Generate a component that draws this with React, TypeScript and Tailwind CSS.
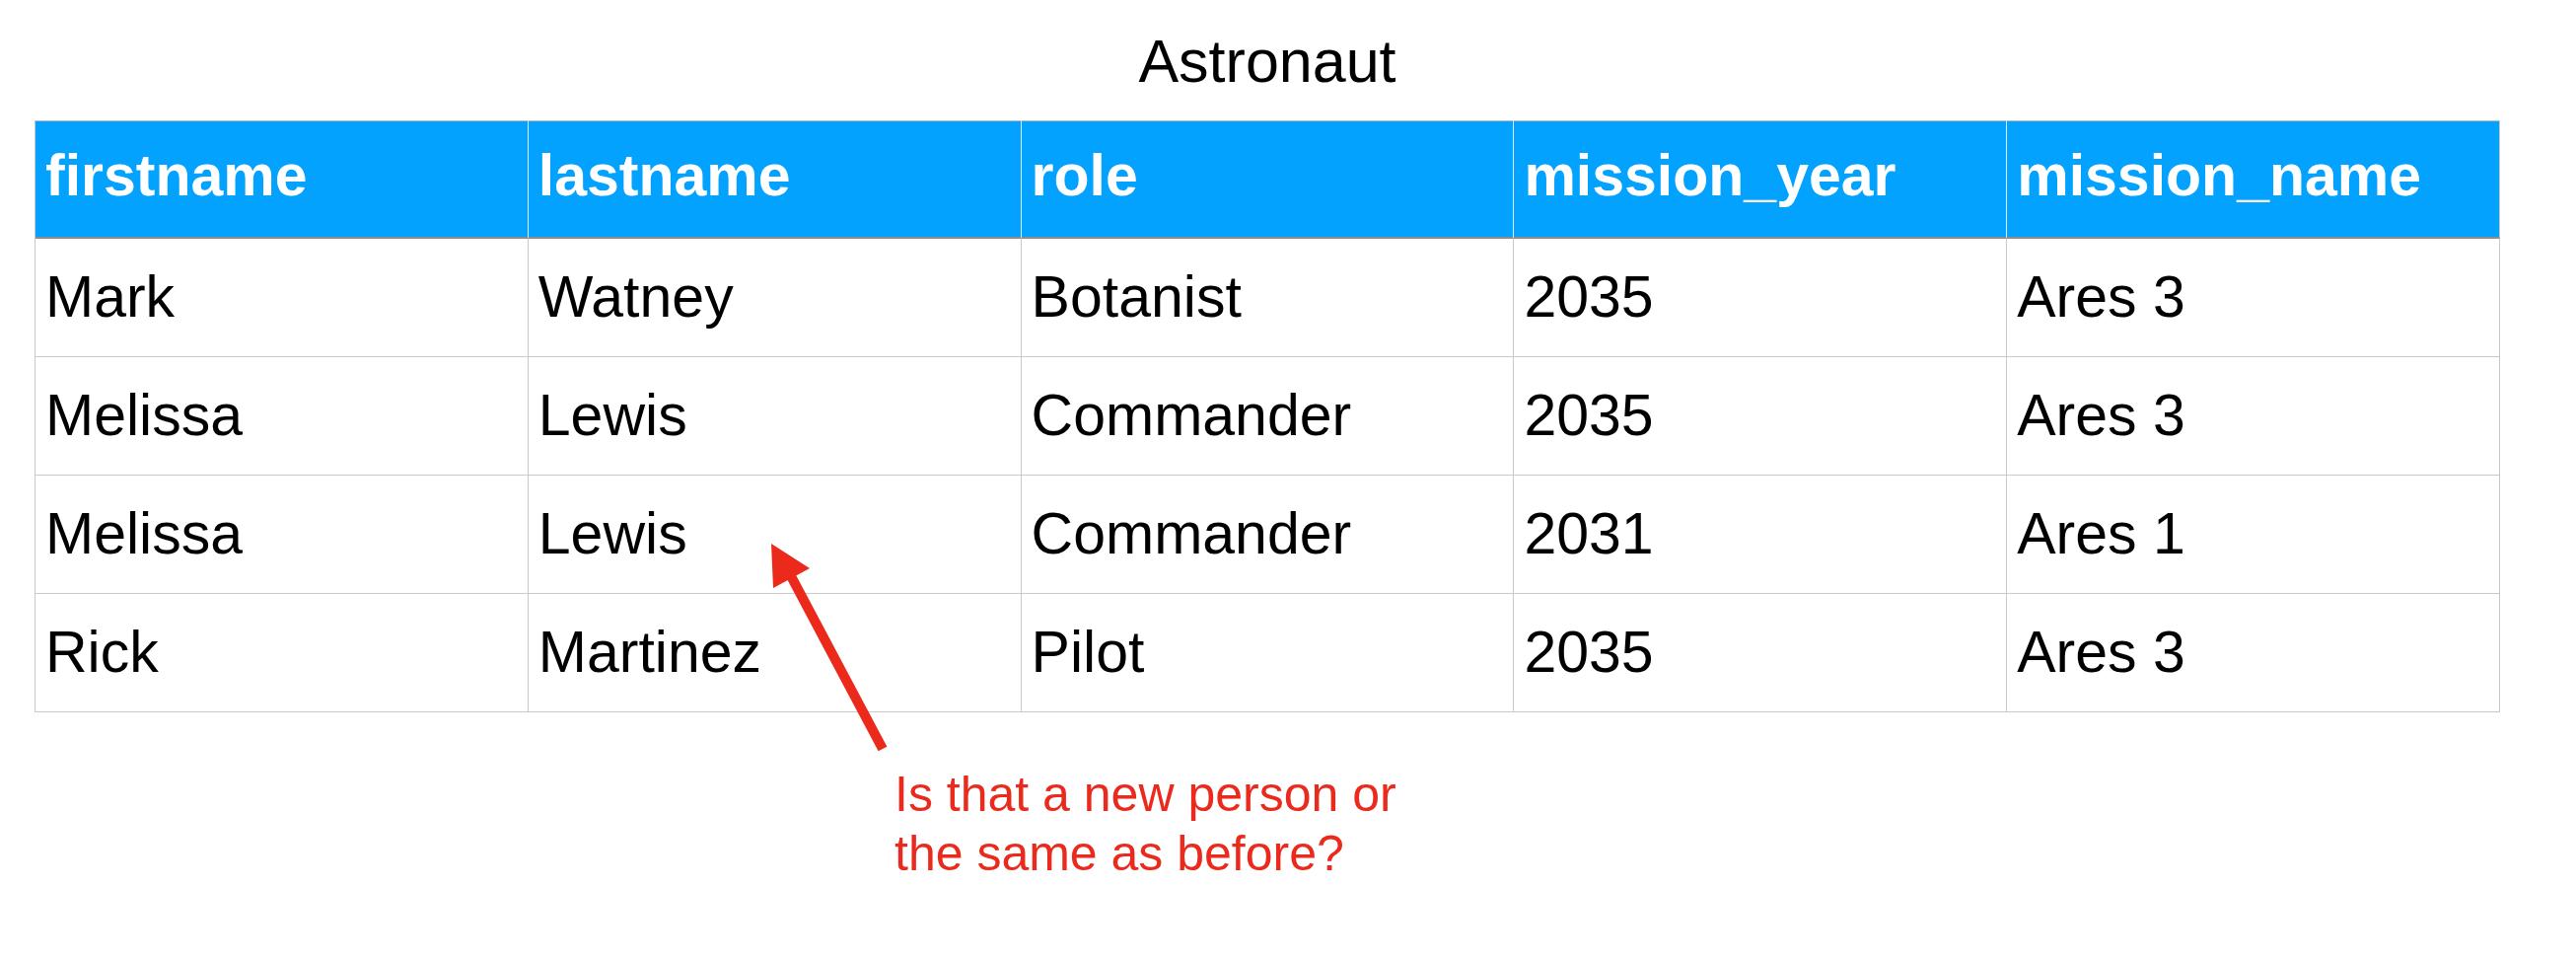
const columns = ["firstname", "lastname", "role", "mission_year", "mission_name"]

const rows = [
	["Mark", "Watney", "Botanist", "2035", "Ares 3"],
	["Melissa", "Lewis", "Commander", "2035", "Ares 3"],
	["Melissa", "Lewis", "Commander", "2031", "Ares 1"],
	["Rick", "Martinez", "Pilot", "2035", "Ares 3"],
]

const App = () => {
	return (
		<div
			className="relative w-[2612px] h-[974px] bg-white text-black overflow-hidden"
			style={{ fontFamily: '"Liberation Sans", Arial, sans-serif' }}>
			<div className="flex flex-col pl-[35px] pt-[27px]">
				<h1 className="w-[2500px] text-center text-[61px] leading-[70px] font-normal">
					Astronaut
				</h1>

				<div className="mt-[25px] w-[2500px] grid grid-cols-5 border-l border-[#c9c9c9]">
					{columns.map((col, i) => (
						<div
							key={col}
							className={
								i < columns.length - 1
									? "h-[120px] flex items-center pl-[10px] pb-[6px] bg-[#02a2fe] text-white font-bold text-[59px] border-t border-t-[#bcbcbc] border-b-2 border-b-[#8c8c8c] border-r border-r-[#d6efff]"
									: "h-[120px] flex items-center pl-[10px] pb-[6px] bg-[#02a2fe] text-white font-bold text-[59px] border-t border-t-[#bcbcbc] border-b-2 border-b-[#8c8c8c] border-r border-r-[#c9c9c9]"
							}>
							{col}
						</div>
					))}

					{rows.map((row, r) =>
						row.map((cell, c) => (
							<div
								key={r + "-" + c}
								className="h-[120px] flex items-center pl-[10px] text-[59px] border-r border-b border-[#c9c9c9]">
								{cell}
							</div>
						))
					)}
				</div>
			</div>

			{/* annotation arrow */}
			<svg
				className="absolute left-[760px] top-[530px]"
				width="160"
				height="250"
				viewBox="0 0 160 250">
				<line
					x1="41"
					y1="52"
					x2="135"
					y2="229"
					stroke="#ec2a1c"
					strokeWidth="10"
				/>
				<polygon points="22,21 61,46 24,66" fill="#ec2a1c" />
			</svg>

			<div className="absolute left-[907px] top-[775px] text-[50px] leading-[60px] text-[#ea2a1c]">
				Is that a new person or
				<br />
				the same as before?
			</div>
		</div>
	)
}

export default App
